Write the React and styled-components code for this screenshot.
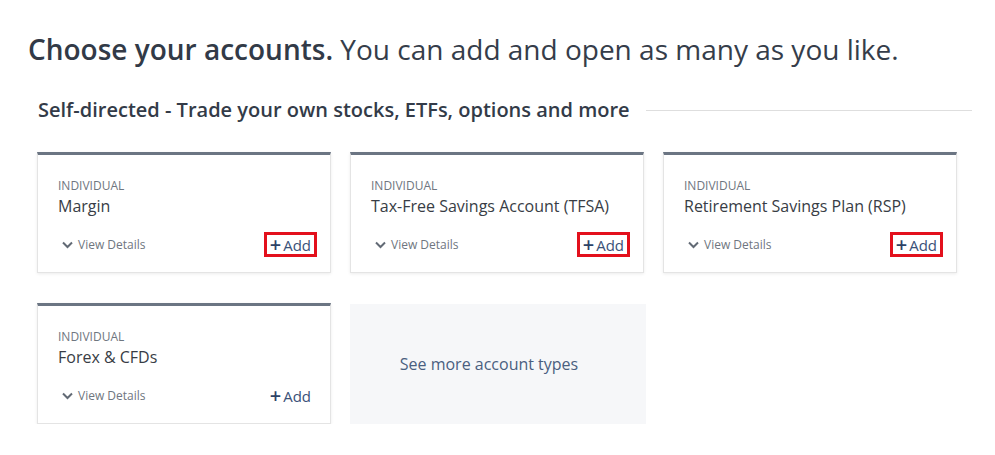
import styled, { createGlobalStyle } from 'styled-components';

const GlobalStyle = createGlobalStyle`
    body {
        margin: 0;
        background: #fff;
        font-family: "Open Sans", "Liberation Sans", sans-serif;
    }
`;

const Page = styled.div`
    padding: 31px 23px 0 28px;
`;
const Title = styled.h1`
    margin: 0;
    font-size: 28px;
    line-height: 36px;
    font-weight: normal;
    color: #353d4a;
    strong {
        font-weight: 600;
        color: #323a47;
    }
`;
const Section = styled.section`
    padding: 0 0 0 9px;
    margin-top: 30px;
`;
const SectionHead = styled.div`
    display: flex;
    align-items: center;
    gap: 16px;
    padding-left: 1px;
`;
const SectionTitle = styled.h2`
    margin: 0;
    font-size: 20px;
    line-height: 26px;
    font-weight: 600;
    color: #333b48;
    white-space: nowrap;
`;
const Rule = styled.div`
    flex: 1;
    height: 1px;
    background: #dedede;
`;
const Grid = styled.div`
    display: grid;
    grid-template-columns: repeat(3, 294px);
    column-gap: 19px;
    row-gap: 30px;
    margin-top: 29px;
`;
const Card = styled.div`
    background: #fff;
    border: 1px solid #e4e4e4;
    border-top: 3px solid #6b7583;
    box-shadow: 0 1px 3px rgba(0, 0, 0, 0.08);
    padding: 23px 13px 15px 20px;
    height: 121px;
    box-sizing: border-box;
    display: flex;
    flex-direction: column;
`;
const Kind = styled.div`
    font-size: 12px;
    line-height: 16px;
    color: #6f7680;
    text-transform: uppercase;
`;
const Name = styled.div`
    font-size: 16px;
    line-height: 22px;
    color: #383d45;
    margin-top: 1px;
`;
const Footer = styled.div`
    margin-top: auto;
    display: flex;
    align-items: center;
    justify-content: space-between;
`;
const Details = styled.button`
    display: flex;
    align-items: center;
    gap: 5px;
    padding: 0 0 0 4px;
    border: none;
    background: none;
    font-family: inherit;
    font-size: 12px;
    color: #6f7680;
    cursor: pointer;
`;
const AddButton = styled.button`
    display: flex;
    align-items: center;
    gap: 2px;
    padding: 0 3px 0 3px;
    height: 25px;
    box-sizing: border-box;
    border: 3px solid ${p => (p.$marked ? '#e3101c' : 'transparent')};
    background: #fff;
    font-family: inherit;
    font-size: 15px;
    color: #3a5278;
    cursor: pointer;
`;
const Plus = styled.span`
    font-size: 20px;
    line-height: 14px;
    font-weight: 600;
    color: #2c4266;
`;
const MoreBox = styled.div`
    background: #f6f7f9;
    height: 120px;
    margin-top: 1px;
    width: 296px;
    box-sizing: border-box;
    padding-right: 18px;
    display: flex;
    align-items: center;
    justify-content: center;
    font-size: 16px;
    color: #4a5f80;
`;

const Chevron = () => (
    <svg width="11" height="8" viewBox="0 0 11 8">
        <path d="M1 1.5 L5.5 6 L10 1.5" fill="none" stroke="#626a75" strokeWidth="2" />
    </svg>
);

const accounts = [
    { name: 'Margin', marked: true },
    { name: 'Tax-Free Savings Account (TFSA)', marked: true },
    { name: 'Retirement Savings Plan (RSP)', marked: true },
    { name: 'Forex & CFDs', marked: false },
];

const AccountCard = ({ name, marked }) => (
    <Card>
        <Kind>Individual</Kind>
        <Name>{name}</Name>
        <Footer>
            <Details><Chevron />View Details</Details>
            <AddButton $marked={marked}><Plus>+</Plus>Add</AddButton>
        </Footer>
    </Card>
);

export default function App() {
    return (
        <Page>
            <GlobalStyle />
            <Title><strong>Choose your accounts.</strong> You can add and open as many as you like.</Title>
            <Section>
                <SectionHead>
                    <SectionTitle>Self-directed - Trade your own stocks, ETFs, options and more</SectionTitle>
                    <Rule />
                </SectionHead>
                <Grid>
                    {accounts.map(a => <AccountCard key={a.name} {...a} />)}
                    <MoreBox>See more account types</MoreBox>
                </Grid>
            </Section>
        </Page>
    );
}
